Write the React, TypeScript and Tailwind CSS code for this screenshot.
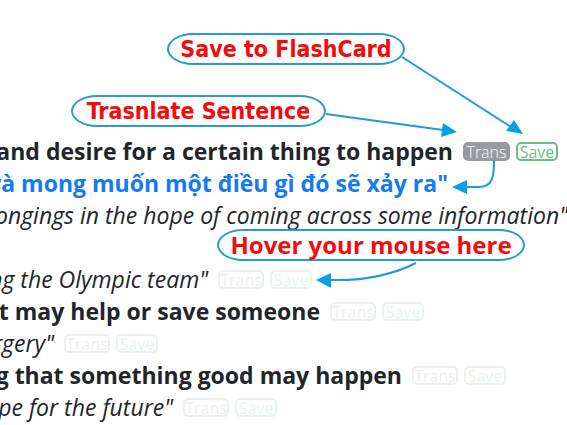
import { clsx } from "clsx";

type Kind = "meaning" | "translation" | "example";

interface Line {
  text: string;
  kind: Kind;
  width: string;
  actions?: "active" | "faded";
}

const lines: Line[] = [
  { text: "and desire for a certain thing to happen", kind: "meaning", width: "w-[453px]", actions: "active" },
  { text: "và mong muốn một điều gì đó sẽ xảy ra\"", kind: "translation", width: "w-[448px]" },
  { text: "belongings in the hope of coming across some information\"", kind: "example", width: "w-[568px]" },
  { text: "", kind: "example", width: "w-[208px]" },
  { text: "making the Olympic team\"", kind: "example", width: "w-[208px]", actions: "faded" },
  { text: "that may help or save someone", kind: "meaning", width: "w-[320px]", actions: "faded" },
  { text: "surgery\"", kind: "example", width: "w-[54px]", actions: "faded" },
  { text: "feeling that something good may happen", kind: "meaning", width: "w-[402px]", actions: "faded" },
  { text: "hope for the future\"", kind: "example", width: "w-[173px]", actions: "faded" },
];

const kindStyles: Record<Kind, string> = {
  meaning: "text-[23px]/8 font-bold text-[#212529]",
  translation: "text-[23px]/8 font-bold text-[#1479f5]",
  example: "text-[23px]/8 italic text-[#212529]",
};

function Actions({ active }: { active: boolean }) {
  const base = "flex h-[19px] items-center justify-center rounded-[5px] border-2 pt-0.5 text-base";
  return (
    <div className={clsx("flex shrink-0 gap-1.5", !active && "opacity-15")}>
      <button
        type="button"
        className={clsx(base, active ? "w-[47px] border-[#969ba1] bg-[#969ba1] font-light text-white" : "w-[46px] border-[#8b9096] text-[#8b9096]")}
      >
        Trans
      </button>
      <button type="button" className={clsx(base, "w-[42px] border-[#70bd83] text-[#70bd83]")}>
        Save
      </button>
    </div>
  );
}

function Callout({ text, className }: { text: string; className: string }) {
  return (
    <div
      className={clsx(
        "absolute flex h-8 items-center justify-center rounded-[26px/16px] border-2 border-[#259bd0] bg-white font-bold whitespace-nowrap text-[#f20c0c]",
        className,
      )}
    >
      {text}
    </div>
  );
}

function Arrows() {
  return (
    <svg className="pointer-events-none absolute top-0 left-0" width="567" height="425" viewBox="0 0 567 425" fill="none" aria-hidden="true">
      <g stroke="#209bd4" strokeWidth="2">
        <path d="M402 57 L511 127" />
        <path d="M326 114 L443 130" />
        <path d="M494 160 C494 176 493 187 479 187 L466 187" />
        <path d="M416 263 C390 276 361 281 330 280" />
      </g>
      <g fill="#06a0e8">
        <path d="M523 134 L506 131 L514 120 Z" />
        <path d="M457 132 L443 123 L441 137 Z" />
        <path d="M452 187 L467 180 L467 194 Z" />
        <path d="M316 280 L331 273 L331 288 Z" />
      </g>
    </svg>
  );
}

export default function App() {
  return (
    <main className="relative overflow-hidden bg-white pt-[135px] pb-0.5 font-['Open_Sans','Noto_Sans',sans-serif]">
      {lines.map((line, i) => (
        <div key={i} className="flex h-8 items-center gap-2.5">
          <p className={clsx("flex shrink-0 justify-end whitespace-nowrap", line.width, kindStyles[line.kind])}>
            {line.text}
          </p>
          {line.actions && <Actions active={line.actions === "active"} />}
        </div>
      ))}
      <Callout text="Save to FlashCard" className="top-[33px] left-[167px] w-[238px] font-['DejaVu_Sans_Condensed','DejaVu_Sans',sans-serif] text-[23px]" />
      <Callout text="Trasnlate Sentence" className="top-[95px] left-[71px] w-[255px] font-['DejaVu_Sans_Condensed','DejaVu_Sans',sans-serif] text-[23px]" />
      <Callout text="Hover your mouse here" className="top-[229px] left-[217px] w-[308px] text-2xl" />
      <Arrows />
    </main>
  );
}
